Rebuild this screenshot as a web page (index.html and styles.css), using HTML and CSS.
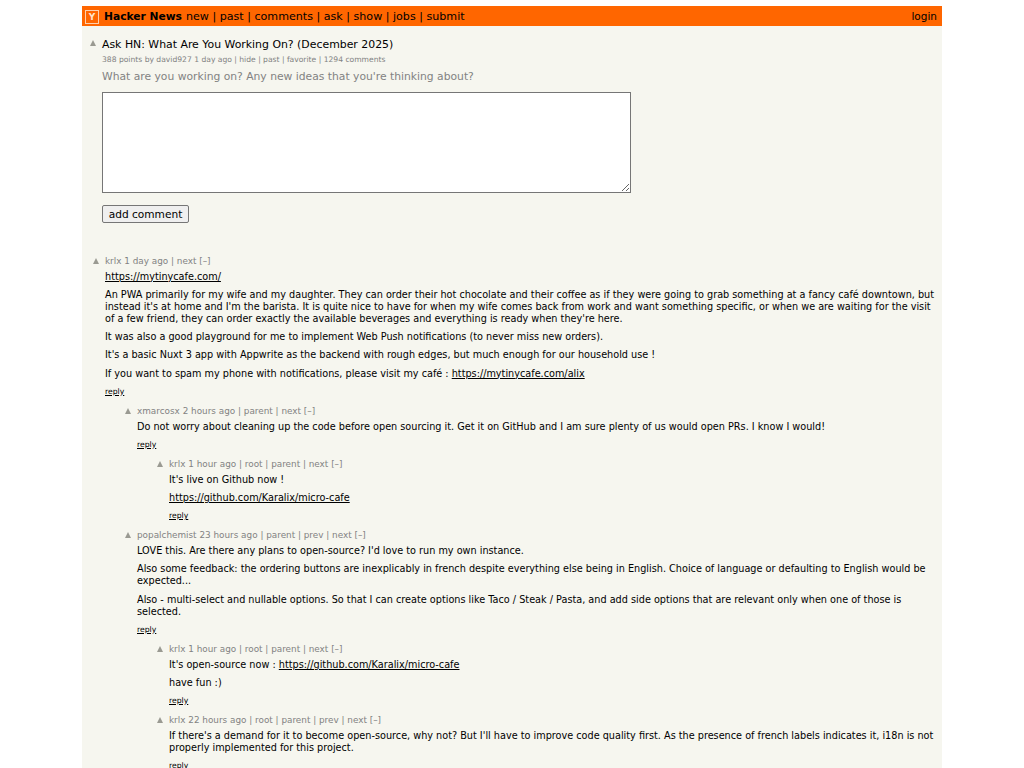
FILE: index.html
```html
<!DOCTYPE html>
<html lang="en">
  <head>
    <meta charset="UTF-8" />
    <meta name="viewport" content="width=device-width, initial-scale=1.0" />
    <title>Ask HN: What Are You Working On? (December 2025) | Hacker News</title>
    <link rel="stylesheet" href="styles.css">
  </head>

  <body>
    <div class="page">
      <header class="topbar">
        <span class="logo">Y</span>
        <b class="site-name">Hacker News</b>
        <nav class="nav">new | past | comments | ask | show | jobs | submit</nav>
        <span class="login">login</span>
      </header>

      <section class="story">
        <div class="story-title"><span class="arrow"></span>Ask HN: What Are You Working On? (December 2025)</div>
        <div class="story-sub">388 points by david927 1 day ago | hide | past | favorite | 1294 comments</div>
        <div class="story-text">What are you working on? Any new ideas that you're thinking about?</div>
        <textarea class="reply-box"></textarea>
        <button class="add-comment" type="button">add comment</button>
      </section>

      <section class="comments">
        <div class="comment">
          <div class="head"><span class="arrow"></span>krlx 1 day ago | next [–]</div>
          <p><a href="#">https://mytinycafe.com/</a></p>
          <p>An PWA primarily for my wife and my daughter. They can order their hot chocolate and their coffee as if they were going to grab something at a fancy café downtown, but instead it's at home and I'm the barista. It is quite nice to have for when my wife comes back from work and want something specific, or when we are waiting for the visit of a few friend, they can order exactly the available beverages and everything is ready when they're here.</p>
          <p>It was also a good playground for me to implement Web Push notifications (to never miss new orders).</p>
          <p>It's a basic Nuxt 3 app with Appwrite as the backend with rough edges, but much enough for our household use !</p>
          <p>If you want to spam my phone with notifications, please visit my café : <a href="#">https://mytinycafe.com/alix</a></p>
          <a class="reply" href="#">reply</a>
        </div>

        <div class="comment depth1">
          <div class="head"><span class="arrow"></span>xmarcosx 2 hours ago | parent | next [–]</div>
          <p>Do not worry about cleaning up the code before open sourcing it. Get it on GitHub and I am sure plenty of us would open PRs. I know I would!</p>
          <a class="reply" href="#">reply</a>
        </div>

        <div class="comment depth2">
          <div class="head"><span class="arrow"></span>krlx 1 hour ago | root | parent | next [–]</div>
          <p>It's live on Github now !</p>
          <p><a href="#">https://github.com/Karalix/micro-cafe</a></p>
          <a class="reply" href="#">reply</a>
        </div>

        <div class="comment depth1">
          <div class="head"><span class="arrow"></span>popalchemist 23 hours ago | parent | prev | next [–]</div>
          <p>LOVE this. Are there any plans to open-source? I'd love to run my own instance.</p>
          <p>Also some feedback: the ordering buttons are inexplicably in french despite everything else being in English. Choice of language or defaulting to English would be expected...</p>
          <p>Also - multi-select and nullable options. So that I can create options like Taco / Steak / Pasta, and add side options that are relevant only when one of those is selected.</p>
          <a class="reply" href="#">reply</a>
        </div>

        <div class="comment depth2">
          <div class="head"><span class="arrow"></span>krlx 1 hour ago | root | parent | next [–]</div>
          <p>It's open-source now : <a href="#">https://github.com/Karalix/micro-cafe</a></p>
          <p>have fun :)</p>
          <a class="reply" href="#">reply</a>
        </div>

        <div class="comment depth2">
          <div class="head"><span class="arrow"></span>krlx 22 hours ago | root | parent | prev | next [–]</div>
          <p>If there's a demand for it to become open-source, why not? But I'll have to improve code quality first. As the presence of french labels indicates it, i18n is not properly implemented for this project.</p>
          <a class="reply" href="#">reply</a>
        </div>
      </section>
    </div>
  </body>
</html>
```

FILE: styles.css
```css
html,
body {
  height: 100%;
  overflow: hidden;
}

body {
  margin: 0;
  padding-top: 6px;
  background-color: #fff;
  font-family: "DejaVu Sans", Verdana, sans-serif;
  font-size: 10px;
  line-height: 12px;
  color: #000;
  box-sizing: border-box;
}

a {
  color: #000;
}

.page {
  width: 860px;
  height: 100%;
  margin-left: 82px;
  background-color: #f6f6ef;
}

.topbar {
  display: flex;
  align-items: center;
  height: 20px;
  padding: 1px 5px 0 3px;
  box-sizing: border-box;
  background-color: #ff6600;
  color: #000;
}

.logo {
  width: 14px;
  height: 14px;
  margin-right: 5px;
  box-sizing: border-box;
  border: 1px solid #ffd0ad;
  text-align: center;
  font-size: 9px;
  font-weight: 700;
  line-height: 12px;
  color: #ffe3cc;
}

.site-name {
  margin-right: 4px;
  font-size: 10.7px;
}

.nav {
  font-size: 11.1px;
}

.login {
  margin: 0 0 2px auto;
  font-size: 10.5px;
}

.arrow {
  display: inline-block;
  width: 0;
  height: 0;
  border-left: 3.5px solid transparent;
  border-right: 3.5px solid transparent;
  border-bottom: 6px solid #9a9a92;
}

.story {
  display: flex;
  flex-direction: column;
  align-items: flex-start;
  padding: 12px 0 0 20px;
}

.story-title {
  position: relative;
  font-size: 10.9px;
  line-height: 13px;
}

.story-title .arrow {
  position: absolute;
  left: -12px;
  top: 2px;
}

.story-sub {
  margin-top: 4px;
  font-size: 7.6px;
  line-height: 10px;
  color: #828282;
}

.story-text {
  margin-top: 5px;
  font-size: 10.75px;
  line-height: 13px;
  color: #828282;
}

.reply-box {
  display: block;
  width: 529px;
  height: 101px;
  margin: 9px 0 0;
  padding: 2px;
  box-sizing: border-box;
  background-color: #fff;
  border: 1px solid #767676;
}

.add-comment {
  margin-top: 12px;
  height: 18px;
  width: 87px;
  padding: 0;
  font-family: inherit;
  font-size: 10.6px;
  color: #000;
  background-color: #efefef;
  border: 1px solid #767676;
  border-radius: 2px;
}

.comments {
  padding-top: 32px;
}

.comment {
  padding-left: 23px;
  margin-bottom: 8.5px;
}

.depth1 {
  padding-left: 55px;
}

.depth2 {
  padding-left: 87px;
}

.head {
  position: relative;
  font-size: 8.85px;
  line-height: 12px;
  color: #828282;
}

.head .arrow {
  position: absolute;
  left: -12px;
  top: 3px;
}

.comment p {
  margin: 6.3px 4px 0 0;
  font-size: 9.7px;
  line-height: 12px;
}

.head + p {
  margin-top: 3.5px;
}

.reply {
  display: block;
  margin-top: 7px;
  font-size: 7.7px;
  line-height: 10px;
}
```
